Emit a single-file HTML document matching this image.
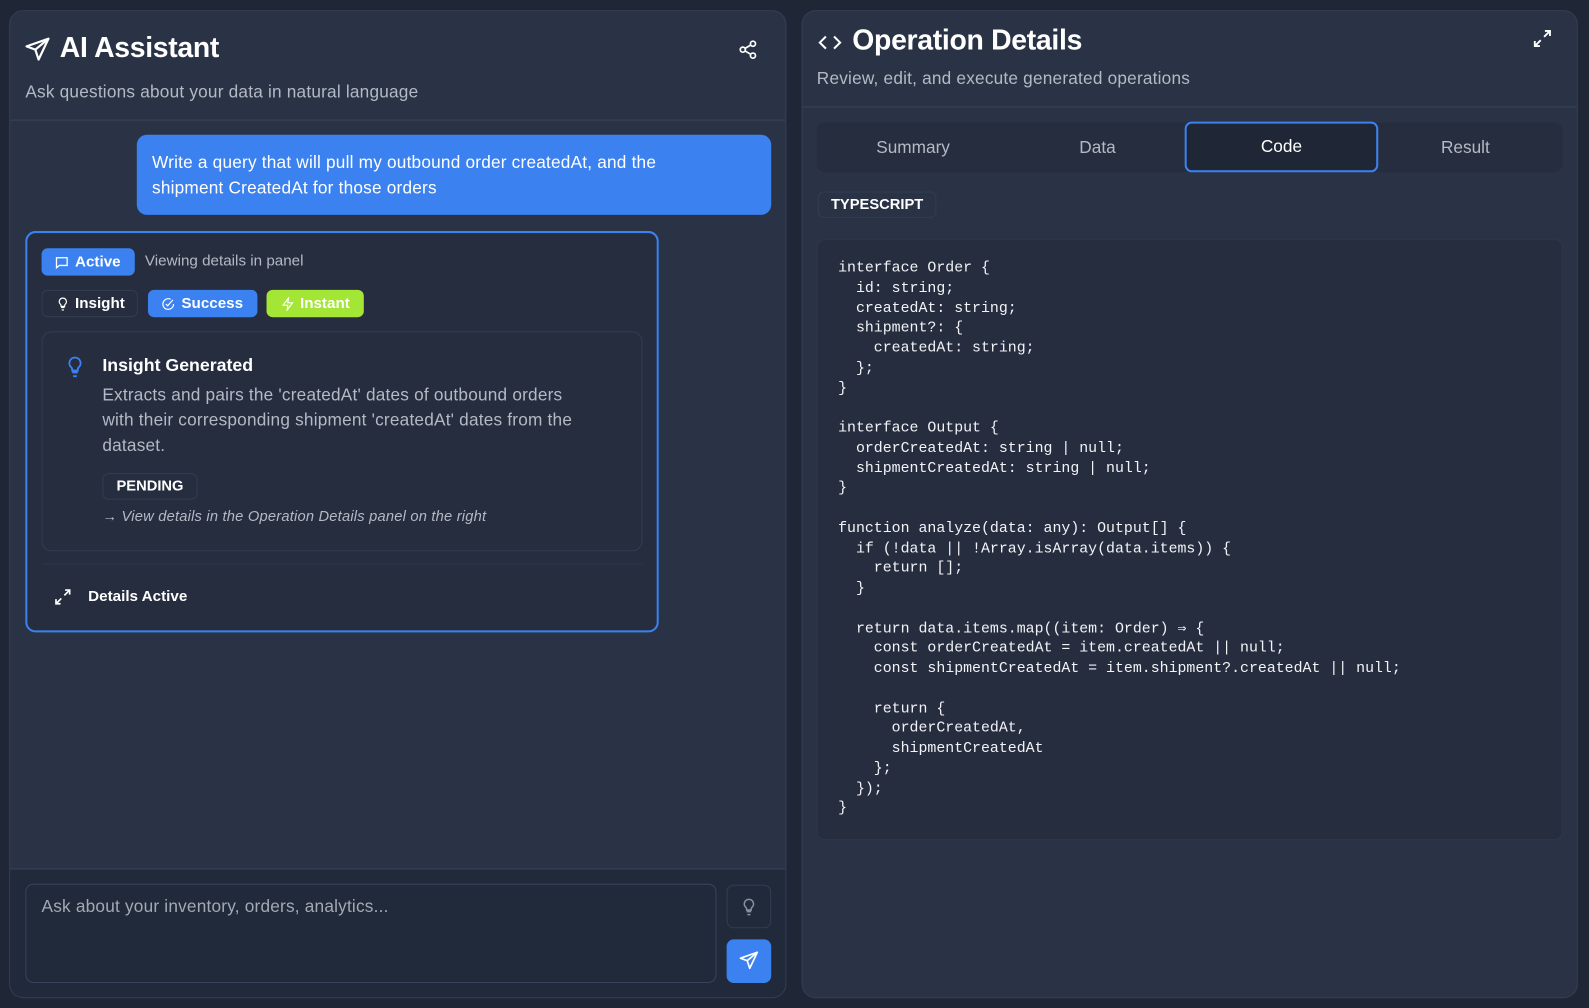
<!DOCTYPE html>
<html><head><meta charset="utf-8"><style>
*{box-sizing:border-box;margin:0;padding:0}
html,body{width:1589px;height:1008px;overflow:hidden}
body{background:#1f2737;font-family:"Liberation Sans",sans-serif;color:#fff}
#w{position:absolute;left:0;top:0;width:1568px;height:995px;transform:scale(1.0134);transform-origin:0 0}
.abs{position:absolute}
.panel{position:absolute;background:#2a3346;border:1px solid #343e52;border-radius:14px;overflow:hidden}
svg{display:block}
.code{font-family:"Liberation Mono",monospace;font-size:14.7px;line-height:19.75px;color:#f1f3f6;white-space:pre}
</style></head><body><div id="w">

<div class="panel" style="left:9px;top:10px;width:767px;height:975px">
  <svg class="abs" style="left:14px;top:25px" width="26" height="26" viewBox="0 0 24 24" fill="none" stroke="#fff" stroke-width="2" stroke-linejoin="round"><path d="M22 2L2 9l8 3 3 9z"/><path d="M22 2L10 12" /></svg>
  <div class="abs" style="left:49px;top:20px;font-size:28px;font-weight:bold;letter-spacing:-0.3px">AI Assistant</div>
  <svg class="abs" style="left:718px;top:28px" width="20" height="20" viewBox="0 0 24 24" fill="none" stroke="#fff" stroke-width="2"><circle cx="18" cy="5" r="3"/><circle cx="6" cy="12" r="3"/><circle cx="18" cy="19" r="3"/><path d="M8.6 13.5l6.8 4M15.4 6.5l-6.8 4"/></svg>
  <div class="abs" style="left:15px;top:70px;font-size:17px;letter-spacing:0.2px;color:#b4bac4">Ask questions about your data in natural language</div>
  <div class="abs" style="left:0;top:107px;width:100%;height:1px;background:#38425a"></div>

  <div class="abs" style="left:125px;top:122px;width:626px;height:79px;background:#3b82f0;border-radius:10px;padding:15px 70px 15px 15px;font-size:17px;letter-spacing:0.2px;line-height:25px;color:#fff">Write a query that will pull my outbound order createdAt, and the shipment CreatedAt for those orders</div>

  <div class="abs" style="left:15px;top:217px;width:625px;height:396px;background:#252d3f;border:2px solid #3b82f0;border-radius:10px">
    <div class="abs" style="left:14px;top:15px;width:92px;height:27px;background:#3b82f0;border-radius:6px;font-size:15px;font-weight:bold;line-height:27px;padding-left:33px">Active</div>
    <svg class="abs" style="left:27px;top:22px" width="14" height="14" viewBox="0 0 24 24" fill="none" stroke="#fff" stroke-width="2.2"><path d="M3 4h18v13H8l-5 4z"/></svg>
    <div class="abs" style="left:116px;top:19px;font-size:15px;color:#b4bac4">Viewing details in panel</div>

    <div class="abs" style="left:14px;top:56px;width:95px;height:27px;border:1px solid #333c50;border-radius:6px;font-size:15px;font-weight:bold;line-height:25px;padding-left:32px">Insight</div>
    <svg class="abs" style="left:28px;top:63px" width="14" height="14" viewBox="0 0 24 24" fill="none" stroke="#fff" stroke-width="2"><path d="M9 18h6M10 22h4M12 2a6 6 0 0 0-4 10.5c.8.8 1 1.5 1 2.5v1h6v-1c0-1 .2-1.7 1-2.5A6 6 0 0 0 12 2z"/></svg>
    <div class="abs" style="left:119px;top:56px;width:108px;height:27px;background:#3b82f0;border-radius:6px;font-size:15px;font-weight:bold;line-height:27px;padding-left:33px">Success</div>
    <svg class="abs" style="left:132px;top:63px" width="14" height="14" viewBox="0 0 24 24" fill="none" stroke="#fff" stroke-width="2"><path d="M21 12a9 9 0 1 1-5-8"/><path d="M8 12l3 3 9-10"/></svg>
    <div class="abs" style="left:236px;top:56px;width:96px;height:27px;background:#a3e635;border-radius:6px;font-size:15px;font-weight:bold;line-height:27px;padding-left:33px">Instant</div>
    <svg class="abs" style="left:250px;top:63px" width="14" height="14" viewBox="0 0 24 24" fill="none" stroke="#fff" stroke-width="2"><path d="M13 2L4 14h8l-1 8 9-12h-8z"/></svg>

    <div class="abs" style="left:14px;top:97px;width:593px;height:217px;border:1px solid #333c50;border-radius:10px">
      <svg class="abs" style="left:21px;top:22px" width="22" height="24" viewBox="0 0 24 24" fill="none" stroke="#3b82f0" stroke-width="2"><path d="M9 18h6M10 22h4M12 2a6 6 0 0 0-4 10.5c.8.8 1 1.5 1 2.5v1h6v-1c0-1 .2-1.7 1-2.5A6 6 0 0 0 12 2z"/></svg>
      <div class="abs" style="left:59px;top:22px;font-size:17.5px;font-weight:bold">Insight Generated</div>
      <div class="abs" style="left:59px;top:49px;width:488px;font-size:17px;letter-spacing:0.2px;line-height:25px;color:#b4bac4">Extracts and pairs the 'createdAt' dates of outbound orders with their corresponding shipment 'createdAt' dates from the dataset.</div>
      <div class="abs" style="left:59px;top:139px;width:94px;height:26px;border:1px solid #333c50;border-radius:6px;font-size:14.5px;font-weight:bold;line-height:24px;text-align:center">PENDING</div>
      <div class="abs" style="left:59px;top:174px;font-size:14.5px;font-style:italic;letter-spacing:0.2px;color:#b4bac4">→ View details in the Operation Details panel on the right</div>
    </div>
    <div class="abs" style="left:14px;top:326px;width:593px;height:1px;background:#2e374a"></div>
    <svg class="abs" style="left:26px;top:350px" width="18" height="18" viewBox="0 0 24 24" fill="none" stroke="#fff" stroke-width="2.2"><path d="M15 3h6v6M21 3l-7 7M9 21H3v-6M3 21l7-7"/></svg>
    <div class="abs" style="left:60px;top:350px;font-size:15px;font-weight:bold">Details Active</div>
  </div>

  <div class="abs" style="left:0;top:846px;width:100%;height:130px;background:#212a3b;border-top:1px solid #38425a"></div>
  <div class="abs" style="left:15px;top:861px;width:682px;height:98px;border:1px solid #38425a;border-radius:8px;background:#212a3b;padding:12px 15px;font-size:17px;letter-spacing:0.2px;color:#a4aab4">Ask about your inventory, orders, analytics...</div>
  <div class="abs" style="left:707px;top:862px;width:44px;height:43px;border:1px solid #333c50;border-radius:7px"></div>
  <svg class="abs" style="left:720px;top:874px" width="18" height="20" viewBox="0 0 24 24" fill="none" stroke="#8a919c" stroke-width="2"><path d="M9 18h6M10 22h4M12 2a6 6 0 0 0-4 10.5c.8.8 1 1.5 1 2.5v1h6v-1c0-1 .2-1.7 1-2.5A6 6 0 0 0 12 2z"/></svg>
  <div class="abs" style="left:707px;top:916px;width:44px;height:43px;background:#3b82f0;border-radius:7px"></div>
  <svg class="abs" style="left:719px;top:927px" width="20" height="20" viewBox="0 0 24 24" fill="none" stroke="#fff" stroke-width="2" stroke-linejoin="round"><path d="M22 2L2 9l8 3 3 9z"/><path d="M22 2L10 12"/></svg>
</div>

<div class="panel" style="left:791px;top:10px;width:766px;height:975px">
  <svg class="abs" style="left:14px;top:19px" width="26" height="24" viewBox="0 0 24 24" fill="none" stroke="#fff" stroke-width="2"><path d="M8 6l-6 6 6 6M16 6l6 6-6 6"/></svg>
  <div class="abs" style="left:49px;top:13px;font-size:28px;font-weight:bold;letter-spacing:-0.3px">Operation Details</div>
  <svg class="abs" style="left:720px;top:17px" width="20" height="20" viewBox="0 0 24 24" fill="none" stroke="#fff" stroke-width="2.2"><path d="M15 3h6v6M21 3l-7 7M9 21H3v-6M3 21l7-7"/></svg>
  <div class="abs" style="left:14px;top:57px;font-size:17px;letter-spacing:0.2px;color:#b4bac4">Review, edit, and execute generated operations</div>
  <div class="abs" style="left:0;top:94px;width:100%;height:1px;background:#38425a"></div>

  <div class="abs" style="left:14px;top:110px;width:736px;height:49px;background:#252d3f;border-radius:8px"></div>
  <div class="abs" style="left:14px;top:110px;width:190px;height:49px;line-height:49px;text-align:center;font-size:17px;color:#b4bac4">Summary</div>
  <div class="abs" style="left:196px;top:110px;width:190px;height:49px;line-height:49px;text-align:center;font-size:17px;color:#b4bac4">Data</div>
  <div class="abs" style="left:377px;top:109px;width:191px;height:50px;border:2px solid #3b82f0;border-radius:7px;background:#1f2737;line-height:46px;text-align:center;font-size:17px;color:#fff">Code</div>
  <div class="abs" style="left:559px;top:110px;width:190px;height:49px;line-height:49px;text-align:center;font-size:17px;color:#b4bac4">Result</div>

  <div class="abs" style="left:15px;top:178px;width:117px;height:26px;border:1px solid #333c50;border-radius:6px;font-size:14.5px;font-weight:bold;line-height:24px;text-align:center">TYPESCRIPT</div>

  <div class="abs" style="left:14px;top:225px;width:736px;height:593px;background:#252d3f;border:1px solid #2e374a;border-radius:8px"></div>
  <div class="abs code" style="left:35px;top:245px">interface Order {
  id: string;
  createdAt: string;
  shipment?: {
    createdAt: string;
  };
}

interface Output {
  orderCreatedAt: string | null;
  shipmentCreatedAt: string | null;
}

function analyze(data: any): Output[] {
  if (!data || !Array.isArray(data.items)) {
    return [];
  }

  return data.items.map((item: Order) ⇒ {
    const orderCreatedAt = item.createdAt || null;
    const shipmentCreatedAt = item.shipment?.createdAt || null;

    return {
      orderCreatedAt,
      shipmentCreatedAt
    };
  });
}</div>
</div>
</div></body></html>
